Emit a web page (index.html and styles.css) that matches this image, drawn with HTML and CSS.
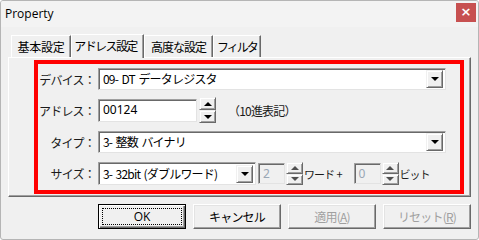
FILE: index.html
```html
<!DOCTYPE html>
<html lang="ja">
<head>
<meta charset="utf-8">
<link rel="stylesheet" href="styles.css">
</head>
<body>
<div class="window">
  <div class="titlebar">
    <span class="title">Property</span>
    <span class="close">×</span>
  </div>
  <div class="tabs">
    <div class="tab t1">基本設定</div>
    <div class="tab active t2">アドレス設定</div>
    <div class="tab t3">高度な設定</div>
    <div class="tab t4">フィルタ</div>
  </div>
  <div class="panel">
    <div class="redbox">
      <div class="row r1">
        <span class="label">デバイス：</span>
        <div class="combo wide"><span class="val">09- DT データレジスタ</span><span class="dd"><i></i></span></div>
      </div>
      <div class="row r2">
        <span class="label">アドレス：</span>
        <div class="edit addr"><span class="val">00124</span></div>
        <div class="spin"><span class="up"><i></i></span><span class="down"><i></i></span></div>
        <span class="note">（10進表記）</span>
      </div>
      <div class="row r3">
        <span class="label">タイプ：</span>
        <div class="combo wide"><span class="val">3- 整数 バイナリ</span><span class="dd"><i></i></span></div>
      </div>
      <div class="row r4">
        <span class="label">サイズ：</span>
        <div class="combo size"><span class="val">3- 32bit (ダブルワード)</span><span class="dd"><i></i></span></div>
        <div class="edit dis"><span class="val">2</span></div>
        <div class="spin dspin"><span class="up"><i></i></span><span class="down"><i></i></span></div>
        <span class="unit">ワード +</span>
        <div class="edit dis e2"><span class="val">0</span></div>
        <div class="spin dspin"><span class="up"><i></i></span><span class="down"><i></i></span></div>
        <span class="unit">ビット</span>
      </div>
    </div>
  </div>
  <div class="buttons">
    <div class="btn default"><span class="focus">OK</span></div>
    <div class="btn">キャンセル</div>
    <div class="btn disabled">適用(<u>A</u>)</div>
    <div class="btn disabled">リセット(<u>R</u>)</div>
  </div>
</div>
</body>
</html>
```

FILE: styles.css
```css
* { box-sizing: border-box; }
html, body { margin: 0; padding: 0; background: #ffffff; }
body {
  font-family: "Noto Sans CJK JP", "Noto Sans", sans-serif;
  font-size: 12px;
  color: #000;
}
.window {
  width: 479px;
  height: 240px;
  background: #f0f0f0;
  border: 1px solid #b5b5b5;
  border-radius: 3px;
  overflow: hidden;
}
.titlebar {
  height: 26px;
  background: #f3f3f3;
  display: flex;
  align-items: flex-start;
  justify-content: space-between;
}
.title {
  font-family: "Open Sans", "Noto Sans", sans-serif;
  font-size: 12px;
  margin: 5px 0 0 4px;
  line-height: 16px;
}
.close {
  width: 20px;
  height: 19px;
  margin: 2px 2px 0 0;
  background: #c75050;
  color: #fff;
  font-family: "DejaVu Sans", sans-serif;
  font-size: 13px;
  font-weight: bold;
  line-height: 18px;
  text-align: center;
}
.tabs {
  display: flex;
  align-items: flex-end;
  height: 30px;
  padding-left: 10px;
}
.tab {
  height: 22px;
  padding: 0;
  border-top: 1px solid #ffffff;
  border-left: 1px solid #ffffff;
  border-right: 1px solid #696969;
  box-shadow: inset -1px 0 0 #a0a0a0;
  line-height: 21px;
  font-size: 12px;
  color: #000;
  white-space: nowrap;
  text-align: center;
  letter-spacing: -0.3px;
}
.t1 { width: 60px; }
.tab.active {
  width: 73px;
  height: 24px;
  margin-bottom: -1px;
  background: #f0f0f0;
  position: relative;
  z-index: 2;
  line-height: 22px;
  letter-spacing: -1.6px;
  padding-right: 4px;
}
.t3 { width: 69px; letter-spacing: -1px; }
.t4 { width: 48px; letter-spacing: -2px; }
.panel {
  margin-left: 7px;
  width: 463px;
  height: 140px;
  border-top: 1px solid #ffffff;
  border-left: 1px solid #ffffff;
  border-right: 1px solid #696969;
  border-bottom: 1px solid #696969;
  box-shadow: inset -1px -1px 0 #a0a0a0;
  padding: 2px 6px 3px 25px;
}
.redbox {
  border: 4px solid #ff0000;
  height: 134px;
  padding: 4px 12px 0 0;
  display: flex;
  flex-direction: column;
  gap: 7px;
}
.row {
  display: flex;
  align-items: center;
  height: 22px;
}
.r2 { height: 26px; }
.r3 { margin-top: 1px; }
.r4 { margin-top: 2px; height: 23px; }
.label {
  width: 57px;
  flex: none;
  margin-right: 3px;
  display: flex;
  justify-content: flex-end;
  white-space: nowrap;
  font-size: 12px;
  letter-spacing: -0.8px;
  color: #1a1a1a;
}
.combo, .edit {
  height: 22px;
  background: #fff;
  border-top: 1px solid #a0a0a0;
  border-left: 1px solid #a0a0a0;
  border-bottom: 1px solid #e3e3e3;
  border-right: 1px solid #e3e3e3;
  box-shadow: inset 1px 1px 0 #696969;
  display: flex;
  align-items: center;
  justify-content: space-between;
  padding: 0 2px 0 4px;
  white-space: nowrap;
  flex: none;
}
.val { font-size: 12px; line-height: 16px; letter-spacing: -0.8px; word-spacing: 1.5px; }
.wide { width: 348px; }
.size { width: 158px; height: 23px; }
.dd {
  width: 17px;
  height: 18px;
  background: #f0f0f0;
  border-top: 1px solid #f0f0f0;
  border-left: 1px solid #f0f0f0;
  border-right: 1px solid #696969;
  border-bottom: 1px solid #696969;
  box-shadow: inset 1px 1px 0 #ffffff, inset -1px -1px 0 #a0a0a0;
  display: flex;
  align-items: center;
  justify-content: center;
}
.dd i, .down i {
  width: 0; height: 0;
  border-left: 4px solid transparent;
  border-right: 4px solid transparent;
  border-top: 4px solid #000;
}
.up i {
  width: 0; height: 0;
  border-left: 4px solid transparent;
  border-right: 4px solid transparent;
  border-bottom: 4px solid #000;
}
.addr { width: 99px; height: 23px; }
.addr .val { letter-spacing: 0; font-family: "Noto Sans", sans-serif; }
.spin {
  width: 17px;
  height: 26px;
  margin-left: 2px;
  display: flex;
  flex-direction: column;
  flex: none;
}
.spin span {
  flex: 1;
  background: #f0f0f0;
  border-top: 1px solid #f0f0f0;
  border-left: 1px solid #f0f0f0;
  border-right: 1px solid #696969;
  border-bottom: 1px solid #696969;
  box-shadow: inset 1px 1px 0 #ffffff, inset -1px -1px 0 #a0a0a0;
  display: flex;
  align-items: center;
  justify-content: center;
}
.dspin { height: 23px; margin-left: 1px; }
.dspin .up i { border-bottom-color: #505050; }
.dspin .down i { border-top-color: #505050; }
.note { margin-left: 12px; font-size: 12px; color: #1a1a1a; letter-spacing: -0.8px; }
.dis {
  width: 27px;
  height: 21px;
  background: #f0f0f0;
  margin-left: 2px;
  color: #9aa7b5;
}
.dis .val { letter-spacing: 0; font-family: "Noto Sans", sans-serif; }
.e2 { margin-left: 12px; }
.unit {
  font-size: 11px;
  color: #1a1a1a;
  white-space: nowrap;
  letter-spacing: -1px;
  word-spacing: 1px;
  margin-left: 1px;
}
.buttons {
  display: flex;
  gap: 7px;
  padding: 7px 0 0 97px;
}
.btn {
  width: 88px;
  height: 25px;
  background: #f0f0f0;
  border-top: 1px solid #ffffff;
  border-left: 1px solid #ffffff;
  border-right: 1px solid #696969;
  border-bottom: 1px solid #696969;
  box-shadow: inset -1px -1px 0 #a0a0a0, inset 1px 1px 0 #e3e3e3;
  display: flex;
  align-items: center;
  justify-content: center;
  font-size: 12px;
  color: #000;
  letter-spacing: -0.8px;
}
.btn.default {
  border: 1px solid #000;
  box-shadow: inset 1px 1px 0 #ffffff, inset -1px -1px 0 #696969, inset -2px -2px 0 #a0a0a0;
  padding: 3px;
}
.focus {
  width: 100%;
  height: 100%;
  border: 1px dotted #000;
  display: flex;
  align-items: center;
  justify-content: center;
  font-family: "Open Sans", "Noto Sans", sans-serif;
  letter-spacing: 0;
}
.btn.disabled { color: #a0a0a0; }
.btn u { text-decoration: underline; }
```
